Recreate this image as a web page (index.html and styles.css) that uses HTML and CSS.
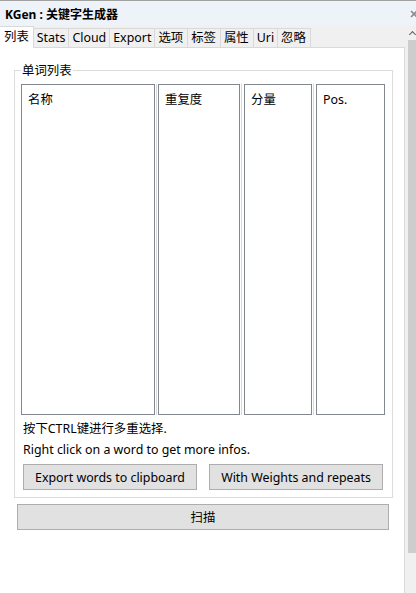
FILE: index.html
```html
<!DOCTYPE html>
<html lang="zh">
<head>
  <meta charset="UTF-8" />
  <title>KGen : 关键字生成器</title>
  <link rel="stylesheet" href="styles.css">
</head>
<body>
  <div class="window">
    <div class="titlebar">
      <span class="title">KGen : 关键字生成器</span>
      <svg class="close" width="7" height="8" viewBox="0 0 7 8">
        <path d="M1 1 L7 7 M7 1 L1 7" stroke="#8a8a8a" stroke-width="1.6" fill="none"/>
      </svg>
    </div>

    <div class="main">
      <div class="content">
        <div class="tabs">
          <div class="tab active">列表</div>
          <div class="tab">Stats</div>
          <div class="tab">Cloud</div>
          <div class="tab">Export</div>
          <div class="tab cjk">选项</div>
          <div class="tab cjk">标签</div>
          <div class="tab cjk">属性</div>
          <div class="tab">Uri</div>
          <div class="tab cjk">忽略</div>
        </div>

        <div class="page">
          <fieldset class="group">
            <legend>单词列表</legend>
            <div class="list">
              <div class="col col-name">名称</div>
              <div class="sep"></div>
              <div class="col col-repeat">重复度</div>
              <div class="sep wide"></div>
              <div class="col col-weight">分量</div>
              <div class="sep wide"></div>
              <div class="col col-pos">Pos.</div>
            </div>
            <div class="hint first">按下CTRL键进行多重选择.</div>
            <div class="hint">Right click on a word to get more infos.</div>
            <div class="button-row">
              <button class="win-button">Export words to clipboard</button>
              <button class="win-button">With Weights and repeats</button>
            </div>
          </fieldset>
          <button class="win-button scan-button">扫描</button>
        </div>
      </div>

      <div class="scrollbar">
        <div class="arrow"></div>
        <div class="thumb"></div>
      </div>
    </div>
  </div>
</body>
</html>
```

FILE: styles.css
```css
* {
  margin: 0;
  padding: 0;
  box-sizing: border-box;
}
body {
  font-family: 'Noto Sans', 'Noto Sans CJK SC', sans-serif;
  font-size: 12.4px;
  color: #000;
  background: #fff;
}
.window {
  width: 416px;
  height: 593px;
  overflow: hidden;
  display: flex;
  flex-direction: column;
}
.titlebar {
  height: 26px;
  border-top: 1px solid #a0a0a0;
  background: #eef2f9;
  display: flex;
  align-items: center;
  justify-content: space-between;
  padding-left: 5px;
}
.title {
  font-weight: bold;
  font-size: 12px;
}
.close {
  margin-right: -1px;
}
.main {
  flex: 1;
  display: flex;
}
.content {
  width: 408px;
  background: #f0f0f0;
}
.tabs {
  height: 22px;
  display: flex;
  align-items: flex-end;
  border-bottom: 1px solid #d9d9d9;
  width: 405px;
}
.tab {
  height: 19px;
  padding: 0 3px;
  border: 1px solid #d9d9d9;
  border-bottom: none;
  margin-left: -1px;
  background: #f0f0f0;
  line-height: 17px;
}
.tab.cjk {
  padding: 0 4px 0 3px;
}
.tab.active {
  height: 22px;
  margin-left: 0;
  margin-bottom: -1px;
  background: #fff;
  border-left: none;
  padding: 0 4px;
  line-height: 20px;
}
.page {
  width: 405px;
  height: 545px;
  background: #fff;
  border-right: 1px solid #d9d9d9;
  padding: 14px 11px 0 14px;
}
.group {
  border: 1px solid #dcdcdc;
  padding: 0 5px 7px 6px;
}
.group legend {
  padding: 0 1px;
  line-height: 17px;
}
.list {
  display: flex;
  height: 331px;
  margin-top: 5px;
}
.col {
  border: 1px solid #828790;
  padding: 6px 6px;
  line-height: 17px;
}
.col-name {
  width: 134px;
}
.col-repeat {
  width: 82px;
}
.col-weight {
  width: 68px;
}
.col-pos {
  width: 69px;
}
.sep {
  width: 3px;
  background: linear-gradient(to right, #fff 1px, #dadada 1px 2px, #fff 2px);
}
.sep.wide {
  width: 4px;
}
.hint {
  height: 21px;
  line-height: 21px;
  padding-left: 2px;
}
.hint.first {
  margin-top: 3px;
}
.button-row {
  display: flex;
  gap: 12px;
  margin-top: 4px;
  padding-left: 2px;
}
.win-button {
  width: 174px;
  height: 26px;
  background: #e1e1e1;
  border: 1px solid #adadad;
  font-family: inherit;
  font-size: 12.4px;
  color: #000;
}
.scan-button {
  display: block;
  width: 372px;
  margin: 6px 0 0 3px;
}
.scrollbar {
  width: 8px;
  background: #f0f0f0;
  display: flex;
  flex-direction: column;
}
.arrow {
  height: 14px;
  position: relative;
}
.arrow::before {
  content: '';
  position: absolute;
  left: 2px;
  top: 6px;
  width: 4px;
  height: 4px;
  border-left: 1px solid #606060;
  border-top: 1px solid #606060;
  transform: rotate(45deg);
}
.thumb {
  height: 513px;
  background: #cdcdcd;
}
```
